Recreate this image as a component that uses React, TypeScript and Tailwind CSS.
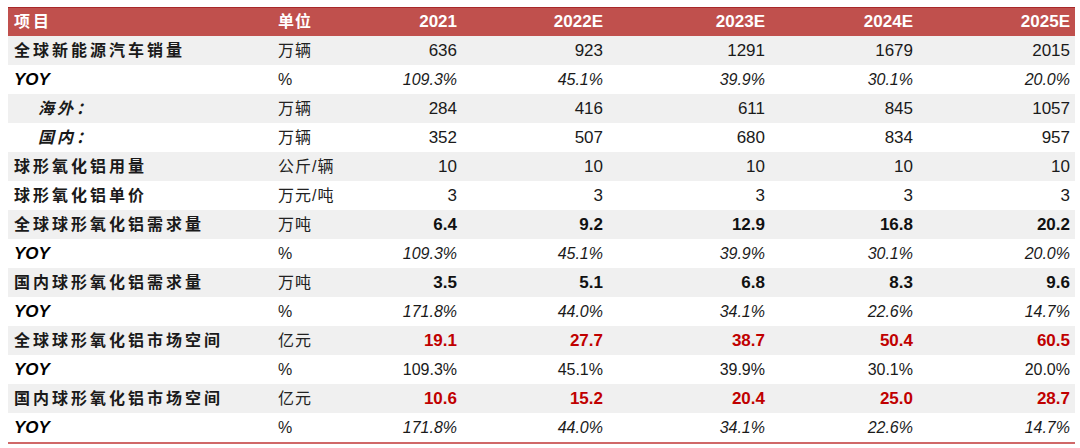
const COLS = '270px 82px 102px 146px 162px 148px 157px'

type Row = {
  label: string
  unit: string
  values: string[]
  kind: 'plain' | 'yoy' | 'yoyPlain' | 'bold' | 'red'
  indent?: boolean
}

const ROWS: Row[] = [
  { label: '全球新能源汽车销量', unit: '万辆', values: ['636', '923', '1291', '1679', '2015'], kind: 'plain' },
  { label: 'YOY', unit: '%', values: ['109.3%', '45.1%', '39.9%', '30.1%', '20.0%'], kind: 'yoy' },
  { label: '海外：', unit: '万辆', values: ['284', '416', '611', '845', '1057'], kind: 'plain', indent: true },
  { label: '国内：', unit: '万辆', values: ['352', '507', '680', '834', '957'], kind: 'plain', indent: true },
  { label: '球形氧化铝用量', unit: '公斤/辆', values: ['10', '10', '10', '10', '10'], kind: 'plain' },
  { label: '球形氧化铝单价', unit: '万元/吨', values: ['3', '3', '3', '3', '3'], kind: 'plain' },
  { label: '全球球形氧化铝需求量', unit: '万吨', values: ['6.4', '9.2', '12.9', '16.8', '20.2'], kind: 'bold' },
  { label: 'YOY', unit: '%', values: ['109.3%', '45.1%', '39.9%', '30.1%', '20.0%'], kind: 'yoy' },
  { label: '国内球形氧化铝需求量', unit: '万吨', values: ['3.5', '5.1', '6.8', '8.3', '9.6'], kind: 'bold' },
  { label: 'YOY', unit: '%', values: ['171.8%', '44.0%', '34.1%', '22.6%', '14.7%'], kind: 'yoy' },
  { label: '全球球形氧化铝市场空间', unit: '亿元', values: ['19.1', '27.7', '38.7', '50.4', '60.5'], kind: 'red' },
  { label: 'YOY', unit: '%', values: ['109.3%', '45.1%', '39.9%', '30.1%', '20.0%'], kind: 'yoyPlain' },
  { label: '国内球形氧化铝市场空间', unit: '亿元', values: ['10.6', '15.2', '20.4', '25.0', '28.7'], kind: 'red' },
  { label: 'YOY', unit: '%', values: ['171.8%', '44.0%', '34.1%', '22.6%', '14.7%'], kind: 'yoy' },
]

const FONT = { fontFamily: '"Liberation Sans", "Noto Sans CJK SC", sans-serif' }

function valueClass(kind: Row['kind']) {
  if (kind === 'yoy') return 'italic text-[16px] text-[#1a1a1a]'
  if (kind === 'yoyPlain') return 'text-[16px] text-[#1a1a1a]'
  if (kind === 'bold') return 'font-bold text-[17px] text-[#111]'
  if (kind === 'red') return 'font-bold text-[17px] text-[#c00000]'
  return 'text-[17px] text-[#1a1a1a]'
}

export default function App() {
  return (
    <div className="h-[448px] w-[1080px] bg-white pl-[8px] pt-[7px]" style={FONT}>
      <div className="w-[1067px]">
        <div
          className="grid h-[29px] items-center border-t border-[#a8282a] bg-[#c0504d] font-bold text-white"
          style={{ gridTemplateColumns: COLS }}
        >
          <div className="pl-[6px] text-[16px] tracking-[3px]">项目</div>
          <div className="text-[16px] tracking-[1px]">单位</div>
          {['2021', '2022E', '2023E', '2024E', '2025E'].map((y) => (
            <div key={y} className="pr-[5px] text-right text-[17px]">
              {y}
            </div>
          ))}
        </div>
        {ROWS.map((r, i) => (
          <div
            key={i}
            className={`grid h-[29px] items-center ${i % 2 === 0 ? 'bg-[#f0f0f0]' : 'bg-white'}`}
            style={{ gridTemplateColumns: COLS }}
          >
            {r.label === 'YOY' ? (
              <div className="pl-[6px] text-[17px] font-bold italic text-black">YOY</div>
            ) : (
              <div
                className={`text-[16px] font-semibold tracking-[3px] text-[#1a1a1a] ${
                  r.indent ? 'pl-[30px] italic' : 'pl-[6px]'
                }`}
              >
                {r.label}
              </div>
            )}
            <div className="text-[16px] tracking-[1px] text-[#222]">{r.unit}</div>
            {r.values.map((v, j) => (
              <div key={j} className={`pr-[5px] text-right ${valueClass(r.kind)}`}>
                {v}
              </div>
            ))}
          </div>
        ))}
        <div className="h-[2px] bg-[#d06868]" />
      </div>
    </div>
  )
}
